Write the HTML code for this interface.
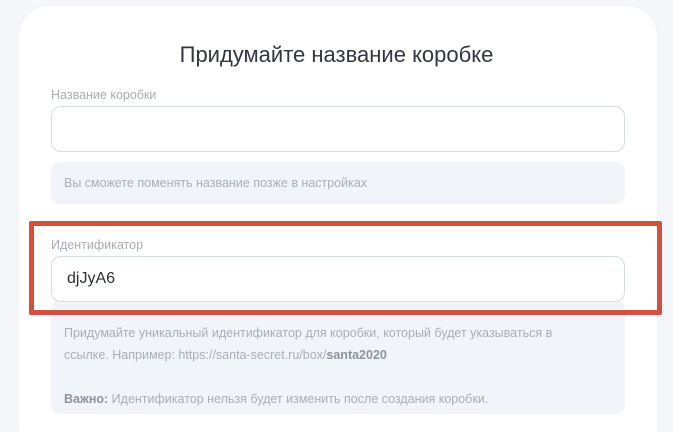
<!DOCTYPE html>
<html><head><meta charset="utf-8"><style>
*{margin:0;padding:0;box-sizing:border-box}
html,body{width:673px;height:432px;overflow:hidden}
body{background:#f6f7fa;font-family:"Liberation Sans","DejaVu Sans",sans-serif;position:relative}
.card{position:absolute;left:19px;top:6px;width:638px;height:426px;background:#fff;border-radius:30px 30px 0 0;box-shadow:0 0 4px rgba(0,0,0,0.04)}
.t{position:absolute;left:0;width:673px;top:42px;text-align:center;font-size:22px;color:#333640}
.lbl{position:absolute;left:51px;font-size:12.5px;color:#a8acb5}
.inp{position:absolute;left:51px;width:574px;height:46px;border:1px solid #d6dde4;border-radius:10px;background:#fff}
.gray{position:absolute;left:51px;width:574px;background:#f1f4f8;border-radius:9px;color:#a9aeb8;font-size:12.5px}
.red{position:absolute;left:29px;top:221px;width:633px;height:94px;border:5px solid #d2503f;border-radius:2px}
b{color:#8e939e}
</style></head><body>
<div class="card"></div>
<div class="t">Придумайте название коробке</div>
<div class="lbl" style="top:88px">Название коробки</div>
<div class="inp" style="top:106px"></div>
<div class="gray" style="top:162px;height:42px;padding:14px 13px">Вы сможете поменять название позже в настройках</div>
<div class="gray" style="top:300px;height:114px;padding:22px 50px 22px 13px;line-height:22px">Придумайте уникальный идентификатор для коробки, который будет указываться в ссылке. Например: https://santa-secret.ru/box/<b>santa2020</b><br><br><b>Важно:</b> Идентификатор нельзя будет изменить после создания коробки.</div>
<div class="red"></div>
<div class="lbl" style="top:238px">Идентификатор</div>
<div class="inp" style="top:256px;padding:13px 15px;font-size:16px;color:#2c2f36">djJyA6</div>
</body></html>
